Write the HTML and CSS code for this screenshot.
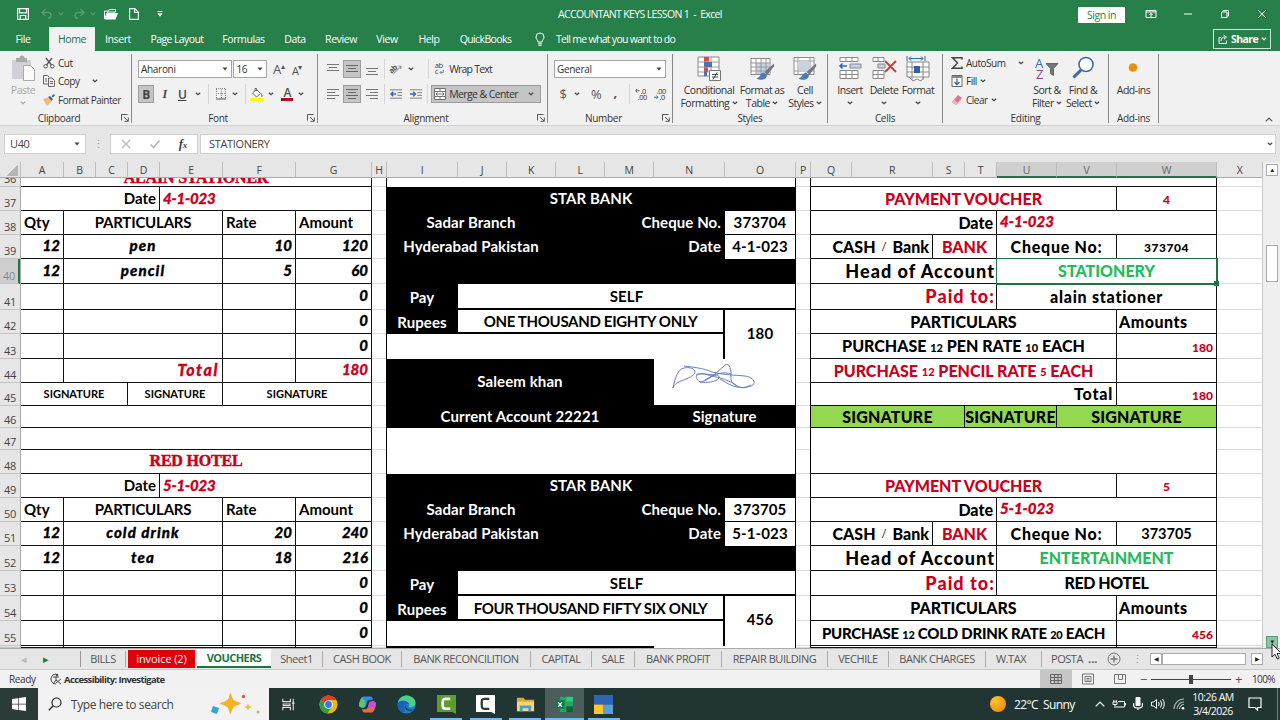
FILE: index.html
```html
<!DOCTYPE html>
<html lang="en">
<head>
    <meta charset="utf-8">
    <title>ACCOUNTANT KEYS LESSON 1 - Excel</title>
    <link rel="stylesheet" href="styles.css">
</head>
<body>
<svg class="symbols">
    <symbol id="chev" viewBox="0 0 6 4"><path d="M.8.8 3 2.8 5.200.8" fill="none" stroke="currentColor" stroke-width="1.2"/></symbol>
    <symbol id="tri" viewBox="0 0 6 4"><path d="M.5.5h5L3 3.500z" fill="currentColor"/></symbol>
    <symbol id="launch" viewBox="0 0 8 8"><path d="M.5 6.500v-6h6M3 3l4 4M7.300 3.500v3.800H3.500" fill="none" stroke="#555"/></symbol>
    <symbol id="brush" viewBox="0 0 20 18"><path d="M19 0 9 9l3 3 7-9z" fill="#777"/><path d="M8.500 9.500c-4 0-3 5-8 6 4 3 11 2 11-3z" fill="#4a7ab8"/></symbol>
    <symbol id="scribble" viewBox="0 0 84 26"><path d="M1 24C3 14 6 5 12 4c5-1 9 0 11 3 1 4-8 8-14 10-5 2-8 5-8 7M12 2c8 1 19 2 28 6 11 3 23 3 33 4 9 1 12 8 6 10-14 5-24-3-31-7M28 18c-6-5-5-9 5-8 9 1 16 1 14 4-3 4-11 5-19 4 9-1 19-12 23-15 5-6 7-1 8 5 0 9-1 10 6 14 5 3 10 1 14-1M33 16c9-6 19-9 26-6M24 11c6-3 11 0 16 1s20 5 25 10" fill="none" stroke="#5870b8" stroke-width=".9"/></symbol>
</svg>

<div class="titlebar">
    <div class="quick">
        <svg class="q-save" viewBox="0 0 12 12"><path d="M.6.6h10.800v10.800H.6zM2.500.6v4.200h7V.6M3.300 11.400V7.500h5.400v3.900" fill="none" stroke="#fff" stroke-width="1.200"/></svg>
        <svg class="q-undo dim" viewBox="0 0 12 10"><path d="M4.500 0 1 3.500 4.500 7M1 3.500h6a3 3 0 0 1 0 6" fill="none" stroke="currentColor" stroke-width="1.400"/></svg>
        <svg class="chev dim"><use href="#chev"/></svg>
        <svg class="q-redo dim" viewBox="0 0 12 10"><path d="M7.500 0 11 3.500 7.500 7M11 3.500H5a3 3 0 0 0 0 6" fill="none" stroke="currentColor" stroke-width="1.400"/></svg>
        <svg class="chev dim"><use href="#chev"/></svg>
        <svg class="q-open" viewBox="0 0 14 12"><path d="M.5 11V3h4l1-1.500h6V4H3.500z" fill="none" stroke="#fff"/><path d="M3.500 5H14l-2.500 6.500H.7z" fill="#fff"/></svg>
        <svg class="q-new" viewBox="0 0 10 12"><path d="M.6.6h5.200l3.600 3.600v7.200H.6zM5.600.6v3.800h3.800" fill="none" stroke="#fff" stroke-width="1.100"/></svg>
        <svg class="q-more" viewBox="0 0 6 6"><path d="M.5.600h5M.8 2.800h4.400L3 5.200z" fill="#fff" stroke="#fff" stroke-width=".8"/></svg>
    </div>
    <div class="doc-title">ACCOUNTANT KEYS LESSON 1&nbsp; -&nbsp; Excel</div>
    <div class="window-buttons">
        <span class="signin">Sign in</span>
        <svg class="wb" viewBox="0 0 12 12"><path d="M1 2.500h10v7H1zM1 4h10M6 9V5.500M4.300 7 6 5.300 7.700 7" fill="none" stroke="#fff"/></svg>
        <svg class="wb" viewBox="0 0 12 12"><path d="M2 6h8" stroke="#fff"/></svg>
        <svg class="wb" viewBox="0 0 12 12"><path d="M2.500 4h5.500v5.500H2.500zM4 4V2.500h5.500V8H8" fill="none" stroke="#fff"/></svg>
        <svg class="wb" viewBox="0 0 12 12"><path d="m2 2 8 8M10 2l-8 8" stroke="#fff"/></svg>
    </div>
</div>

<div class="menubar">
    <span class="menu m-file">File</span>
    <span class="menu m-home active">Home</span>
    <span class="menu m-insert">Insert</span>
    <span class="menu m-page">Page Layout</span>
    <span class="menu m-formulas">Formulas</span>
    <span class="menu m-data">Data</span>
    <span class="menu m-review">Review</span>
    <span class="menu m-view">View</span>
    <span class="menu m-help">Help</span>
    <span class="menu m-quick">QuickBooks</span>
    <svg class="bulb" viewBox="0 0 10 13"><path d="M3 9c0-2-2-2.500-2-5a4 4 0 0 1 8 0c0 2.500-2 3-2 5zM3 10.800h4M3.500 12.400h3" fill="none" stroke="#fff"/></svg>
    <span class="tell">Tell me what you want to do</span>
    <span class="share">
        <svg viewBox="0 0 10 10"><path d="M3 3.500H1v6h7.500v-3M3 7c0-3 2-4 4-4M5.500 1 8.500 3 6 5.200" fill="none" stroke="#fff"/></svg>
        <b>Share</b>
        <svg class="chev"><use href="#chev"/></svg>
    </span>
</div>

<div class="ribbon">
    <section class="group g-clipboard">
        <div class="tools">
            <div class="big off paste">
                <svg class="pic" viewBox="0 0 24 26"><path d="M1 4h19v19H1z" fill="#d3cfd6"/><path d="M5 2h3.500a2.500 2.500 0 0 1 5 0H16v4H5z" fill="#aaa"/><path d="M12.500 9.500h7l4 4v11h-11z" fill="#fafafa" stroke="#aaa"/></svg>
                <span>Paste</span>
                <svg class="chev"><use href="#chev"/></svg>
            </div>
            <div class="stack">
                <span class="item"><svg viewBox="0 0 12 12"><path d="m3 1 5.500 7M9 1 3.500 8" stroke="#555" stroke-width="1.300"/><circle cx="2.600" cy="9.300" r="1.800" fill="none" stroke="#555"/><circle cx="9.300" cy="9.300" r="1.800" fill="none" stroke="#555"/></svg>Cut</span>
                <span class="item copy"><svg viewBox="0 0 12 12"><path d="M5.500 9H.5V.5h4l1.500 1.500M5.500 3h3.500l2.500 2.500v6h-6zM2 4h2M2 6h2M7 6.500h3M7 8.500h3" fill="none" stroke="#666"/></svg>Copy<svg class="chev"><use href="#chev"/></svg></span>
                <span class="item"><svg viewBox="0 0 12 12"><path d="M0 5 5 3.500l3.500 4L4 12z" fill="#efb97b"/><path d="m5 3 2-1 3 3-1.500 2zM8.500 2 11 0l1 1.500-2 2z" fill="#44619a"/></svg>Format Painter</span>
            </div>
        </div>
        <div class="caption">Clipboard<svg class="launch"><use href="#launch"/></svg></div>
    </section>

    <section class="group g-font">
        <div class="tools rows">
            <div class="row">
                <span class="select s-font">Aharoni<svg class="chev"><use href="#tri"/></svg></span>
                <span class="select s-size">16<svg class="chev"><use href="#tri"/></svg></span>
                <span class="grow">A<small>▴</small></span>
                <span class="grow shrink">A<small>▾</small></span>
            </div>
            <div class="row">
                <span class="tb on bold">B</span>
                <span class="tb ital">I</span>
                <span class="tb under">U</span>
                <svg class="chev"><use href="#chev"/></svg>
                <i class="sep"></i>
                <svg class="ic bord" viewBox="0 0 12 12"><path d="M1 .5h10M1 5.500h10M1.500 1v10M6.500 1v10M10.500 1v10" fill="none" stroke="#888" stroke-dasharray="1 1"/><path d="M1 11h10" stroke="#555"/></svg>
                <svg class="chev"><use href="#chev"/></svg>
                <i class="sep"></i>
                <svg class="ic fill" viewBox="0 0 14 13"><path d="M0 10h13v3H0z" fill="#ff0"/><path d="m2.500 5 4-3.500 4 4-4 3.500zM5 3V.5h1.500V3" fill="#fff" stroke="#666"/><path d="M11 5c2 2 2 4 .5 4z" fill="#666"/></svg>
                <svg class="chev"><use href="#chev"/></svg>
                <span class="acolor">A</span>
                <svg class="chev"><use href="#chev"/></svg>
            </div>
        </div>
        <div class="caption">Font<svg class="launch"><use href="#launch"/></svg></div>
    </section>

    <section class="group g-align">
        <div class="tools rows">
            <div class="row">
                <span class="tb"><svg class="ic" viewBox="0 0 12 12"><path d="M0 1.500h12M2 4.500h8M0 7.500h12" stroke="#777"/></svg></span>
                <span class="tb on"><svg class="ic" viewBox="0 0 12 12"><path d="M0 2.500h12M2 5.500h8M0 8.500h12" stroke="#666"/></svg></span>
                <span class="tb"><svg class="ic" viewBox="0 0 12 12"><path d="M0 5.500h12M2 8.500h8M0 11.500h12" stroke="#777"/></svg></span>
                <i class="sep"></i>
                <svg class="ic" viewBox="0 0 14 12"><path d="M4 11.500 13 3M10 2.500l3 .5-.5 3" fill="none" stroke="#777"/><text x="-1" y="9" transform="rotate(-42 4 7)" font-size="9" font-weight="bold" fill="#555">ab</text></svg>
                <svg class="chev"><use href="#chev"/></svg>
                <i class="sep far"></i>
                <span class="wrap"><svg class="ic" viewBox="0 0 12 14"><text x="0" y="6" font-size="9" fill="#444">ab</text><text x="0" y="13" font-size="9" fill="#444">c</text><path d="M10 8v3H6M8 9l-2 2 2 2" fill="none" stroke="#777"/></svg>Wrap Text</span>
            </div>
            <div class="row">
                <span class="tb"><svg class="ic" viewBox="0 0 12 12"><path d="M0 1.500h12M0 4.500h8M0 7.500h12M0 10.500h8" stroke="#777"/></svg></span>
                <span class="tb on"><svg class="ic" viewBox="0 0 12 12"><path d="M0 1.500h12M2 4.500h8M0 7.500h12M2 10.500h8" stroke="#666"/></svg></span>
                <span class="tb"><svg class="ic" viewBox="0 0 12 12"><path d="M0 1.500h12M4 4.500h8M0 7.500h12M4 10.500h8" stroke="#777"/></svg></span>
                <i class="sep"></i>
                <svg class="ic" viewBox="0 0 13 12"><path d="M0 1.500h13M8 4.500h5M8 7.500h5M0 10.500h13" stroke="#777"/><path d="M6.500 6H1M3.500 3.500 1 6l2.500 2.500" fill="none" stroke="#2f6ab5" stroke-width="1.500"/></svg>
                <svg class="ic ind" viewBox="0 0 13 12"><path d="M0 1.500h13M8 4.500h5M8 7.500h5M0 10.500h13" stroke="#777"/><path d="M0 6h5.500M3.500 3.500 6 6 3.500 8.500" fill="none" stroke="#2f6ab5" stroke-width="1.500"/></svg>
                <i class="sep near"></i>
                <span class="merge"><svg class="ic" viewBox="0 0 12 12"><path d="M.5.500h11v11H.5zM.5 3.500h11M.5 8.500h11M6 .5v3M6 8.500v3M2 6h8M3.500 4.500 2 6l1.500 1.500M8.500 4.500 10 6 8.500 7.500" fill="#fff" stroke="#555" stroke-width=".8"/></svg>Merge &amp; Center<svg class="chev"><use href="#chev"/></svg></span>
            </div>
        </div>
        <div class="caption">Alignment<svg class="launch"><use href="#launch"/></svg></div>
    </section>

    <section class="group g-number">
        <div class="tools rows">
            <div class="row"><span class="select s-num">General<svg class="chev"><use href="#tri"/></svg></span></div>
            <div class="row signs">
                <span class="sign">$</span>
                <svg class="chev"><use href="#chev"/></svg>
                <span class="sign pct">%</span>
                <span class="sign comma">,</span>
                <i class="sep"></i>
                <svg class="ic" viewBox="0 0 13 13"><text x="6" y="6" font-size="8" fill="#333">.0</text><text x="3" y="13" font-size="8" fill="#333">.00</text><path d="M5 3H1M2.500 1 .8 3l1.700 2" fill="none" stroke="#555"/></svg>
                <svg class="ic dec" viewBox="0 0 13 13"><text x="3" y="6" font-size="8" fill="#333">.00</text><text x="6" y="13" font-size="8" fill="#333">.0</text><path d="M0 10h4M2.500 8l1.700 2-1.700 2" fill="none" stroke="#2f6ab5"/></svg>
            </div>
        </div>
        <div class="caption">Number<svg class="launch"><use href="#launch"/></svg></div>
    </section>

    <section class="group g-styles">
        <div class="tools">
            <div class="big b-cond">
                <svg class="pic" viewBox="0 0 24 26"><path d="M1 1h21v19H1z" fill="#fff" stroke="#888"/><path d="M1 6h21M1 11h21M1 16h21M8 1v19M14 1v19" stroke="#999"/><path d="M7 1h5v4.500H7zM7 11.500h4V16H7z" fill="#cf4b55"/><path d="M7 6h8v5H7zM7 16h3v4H7z" fill="#4b74ac"/><path d="M12.500 14.500h11v10h-11z" fill="#fff" stroke="#777"/><path d="M15 18.500h6M15 21h6M20 16.500l-4 7" stroke="#444"/></svg>
                <span>Conditional<br>Formatting <svg class="chev"><use href="#chev"/></svg></span>
            </div>
            <div class="big b-fmt">
                <svg class="pic" viewBox="0 0 24 26"><path d="M1 2.500h19v16H1z" fill="#fff" stroke="#888"/><path d="M6 7h14v11H6z" fill="#c4d3e8"/><path d="M1 7h19M1 11h19M1 15h19M6 2.500v16M11 2.500v16M16 2.500v16" stroke="#999"/><use href="#brush" x="6" y="7" width="19" height="18"/></svg>
                <span>Format as<br>Table <svg class="chev"><use href="#chev"/></svg></span>
            </div>
            <div class="big b-cell">
                <svg class="pic" viewBox="0 0 24 26"><path d="M1 1.500h20v17H1z" fill="#fff" stroke="#888"/><path d="M1 5h20M1 15h20M5 1.500v17M17 1.500v17" stroke="#999"/><path d="M5.500 5.500h11v9h-11z" fill="#c9d3e2"/><use href="#brush" x="5" y="7" width="19" height="18"/></svg>
                <span>Cell<br>Styles <svg class="chev"><use href="#chev"/></svg></span>
            </div>
        </div>
        <div class="caption">Styles</div>
    </section>

    <section class="group g-cells">
        <div class="tools">
            <div class="big b-34">
                <svg class="pic" viewBox="0 0 24 26"><path d="M2 1.500h18v4H2zM8 1.500v4M14 1.500v4M2 14.500h18v8H2zM2 18.500h18M8 14.500v8M14 14.500v8" fill="#fff" stroke="#888"/><path d="M12 8h11v4H12z" fill="#c3d5e5" stroke="#888"/><path d="M9 10H2M4.500 7.500 2 10l2.500 2.500" fill="none" stroke="#2f6ab5" stroke-width="1.600"/></svg>
                <span>Insert</span><svg class="chev"><use href="#chev"/></svg>
            </div>
            <div class="big b-34">
                <svg class="pic" viewBox="0 0 24 26"><path d="M1 1.500h11v4H1zM6 1.500v4M1 14.500h11v8H1zM1 18.500h11M6 14.500v8" fill="#fff" stroke="#888"/><path d="M6 8h7v4H6z" fill="#c3d5e5" stroke="#888"/><path d="m13 5 11 11M24 5 13 16" stroke="#d23b3b" stroke-width="1.900"/></svg>
                <span>Delete</span><svg class="chev"><use href="#chev"/></svg>
            </div>
            <div class="big b-34">
                <svg class="pic" viewBox="0 0 24 26"><path d="M1 6h22v15H1zM1 11h22M1 16h22M6 6v18M17 6v18M3 21l4 4 4-2 4 2 3-4" fill="#fff" stroke="#888"/><path d="M8 10h6v7H8z" fill="#2f62a5"/><path d="M1 0v5M19 0v5M3 2.500h14M5 .5 3 2.500l2 2M15 .5l2 2-2 2" fill="none" stroke="#2f6ab5"/></svg>
                <span>Format</span><svg class="chev"><use href="#chev"/></svg>
            </div>
        </div>
        <div class="caption">Cells</div>
    </section>

    <section class="group g-edit">
        <div class="tools">
            <div class="stack">
                <span class="item"><svg viewBox="0 0 12 12"><path d="M11 2.500V.8H1.500L6.500 6l-5 5.200H11V9.500" fill="none" stroke="#444" stroke-width="1.500"/></svg>AutoSum<svg class="chev push"><use href="#chev"/></svg></span>
                <span class="item"><svg viewBox="0 0 12 12"><path d="M1 .5h10v11H1z" fill="#fff" stroke="#666"/><path d="M1 1h10v2H1z" fill="#888"/><path d="M6 3.500V10M3.500 7 6 9.700 8.500 7" fill="none" stroke="#2f6ab5" stroke-width="1.300"/></svg>Fill<svg class="chev"><use href="#chev"/></svg></span>
                <span class="item"><svg viewBox="0 0 12 12"><path d="m1 8 6-7 4 3-6 7z" fill="#e4708f"/><path d="m1 8 2-2.300L7 9l-2 2z" fill="#f3b0c0"/></svg>Clear<svg class="chev"><use href="#chev"/></svg></span>
            </div>
            <div class="big b-sort">
                <svg class="pic" viewBox="0 0 24 26"><text x="0" y="11.500" font-size="13" fill="#3f6dab">A</text><text x="1" y="22.500" font-size="13" fill="#92379c">Z</text><path d="M11 7.500h12l-4.500 5v7l-3-2v-5z" fill="#777" stroke="#666"/></svg>
                <span>Sort &amp;<br>Filter <svg class="chev"><use href="#chev"/></svg></span>
            </div>
            <div class="big b-find">
                <svg class="pic" viewBox="0 0 24 26"><circle cx="15" cy="8.500" r="7" fill="#fff" stroke="#3c69a8" stroke-width="1.600"/><path d="M10 14 2.500 21.500" stroke="#3c69a8" stroke-width="3"/></svg>
                <span>Find &amp;<br>Select <svg class="chev"><use href="#chev"/></svg></span>
            </div>
        </div>
        <div class="caption">Editing</div>
    </section>

    <section class="group g-addins">
        <div class="tools">
            <div class="big b-add"><svg class="pic" viewBox="0 0 24 26"><circle cx="11" cy="11.500" r="4.300" fill="#e8920c"/></svg><span>Add-ins</span></div>
        </div>
        <div class="caption">Add-ins</div>
    </section>
    <svg class="collapse" viewBox="0 0 8 5"><path d="M.7 4.300 4 1l3.300 3.300" fill="none" stroke="#555" stroke-width="1.200"/></svg>
</div>

<div class="formula-bar">
    <div class="namebox">U40<svg class="chev"><use href="#tri"/></svg></div>
    <span class="dots">⋮</span>
    <div class="fx">
        <svg viewBox="0 0 10 10"><path d="m1 1 8 8M9 1 1 9" stroke="#bbb" stroke-width="1.400"/></svg>
        <svg viewBox="0 0 10 10"><path d="m.5 5.500 3 3L9.500 1.500" fill="none" stroke="#bbb" stroke-width="1.700"/></svg>
        <i>f<small>x</small></i>
    </div>
    <div class="formula">STATIONERY<svg class="chev"><use href="#chev"/></svg></div>
</div>

<div class="workbook">
    <div class="cols">
        <span class="corner"></span>
        <span>A</span><span>B</span><span>C</span><span>D</span><span>E</span><span>F</span><span>G</span><span>H</span>
        <span>I</span><span>J</span><span>K</span><span>L</span><span>M</span><span>N</span><span>O</span><span>P</span>
        <span>Q</span><span>R</span><span>S</span><span>T</span><span class="sel">U</span><span class="sel">V</span><span class="sel">W</span><span>X</span>
    </div>
    <div class="sheet">
        <div class="rownums">
            <span>36</span><span>37</span><span>38</span><span>39</span><span class="sel">40</span><span>41</span><span>42</span>
            <span>43</span><span>44</span><span>45</span><span>46</span><span>47</span><span>48</span><span>49</span>
            <span>50</span><span>51</span><span>52</span><span>53</span><span>54</span><span>55</span><span></span>
        </div>

        <div class="panel bill">
            <div class="s7 vendor cut">ALAIN STATIONER</div>
            <div class="s4 right">Date</div><div class="s3 script red up">4-1-023</div>
            <div>Qty</div><div class="s4 center up">PARTICULARS</div><div>Rate</div><div>Amount</div>
            <div class="script right">12</div><div class="s4 script center word">pen</div><div class="script right">10</div><div class="script right">120</div>
            <div class="script right">12</div><div class="s4 script center word">pencil</div><div class="script right">5</div><div class="script right">60</div>
            <div></div><div class="s4"></div><div></div><div class="script right">0</div>
            <div></div><div class="s4"></div><div></div><div class="script right">0</div>
            <div></div><div class="s4"></div><div></div><div class="script right">0</div>
            <div></div><div class="s4 script right red total">Total</div><div></div><div class="script right red">180</div>
            <div class="s3 sign-small">SIGNATURE</div><div class="s2 sign-small">SIGNATURE</div><div class="s2 sign-small">SIGNATURE</div>
            <div class="s7"></div>
            <div class="s7"></div>
            <div class="s7 vendor">RED HOTEL</div>
            <div class="s4 right">Date</div><div class="s3 script red up">5-1-023</div>
            <div>Qty</div><div class="s4 center up">PARTICULARS</div><div>Rate</div><div>Amount</div>
            <div class="script right">12</div><div class="s4 script center word">cold drink</div><div class="script right">20</div><div class="script right">240</div>
            <div class="script right">12</div><div class="s4 script center word">tea</div><div class="script right">18</div><div class="script right">216</div>
            <div></div><div class="s4"></div><div></div><div class="script right">0</div>
            <div></div><div class="s4"></div><div></div><div class="script right">0</div>
            <div></div><div class="s4"></div><div></div><div class="script right">0</div>
            <div></div><div class="s4"></div><div></div><div></div>
        </div>

        <div class="gutter"><i></i><i></i><i></i><i></i><i></i><i></i><i></i><i></i><i></i><i></i><i></i><i></i><i></i><i></i><i></i><i></i><i></i><i></i><i></i><i></i><i></i></div>

        <div class="panel cheque">
            <div class="s7 white"></div>
            <div class="s7 center">STAR BANK</div>
            <div class="s3 center">Sadar Branch</div><div class="s3 right">Cheque No.</div><div class="white center lined">373704</div>
            <div class="s3 center">Hyderabad Pakistan</div><div class="s3 right">Date</div><div class="white center">4-1-023</div>
            <div class="s7"></div>
            <div class="center low">Pay</div><div class="s6 white center thick">SELF</div>
            <div class="center low">Rupees</div><div class="s5 white center thick side sum">ONE THOUSAND EIGHTY ONLY</div><div class="white center r2">180</div>
            <div class="s6 white side"></div>
            <div class="s5 r2 center person">Saleem khan</div><div class="s2 r2 white signed"><svg><use href="#scribble"/></svg></div>
            <div class="s5 center">Current Account 22221</div><div class="s2 center">Signature</div>
            <div class="s7 r2 white"></div>
            <div class="s7 center">STAR BANK</div>
            <div class="s3 center">Sadar Branch</div><div class="s3 right">Cheque No.</div><div class="white center lined">373705</div>
            <div class="s3 center">Hyderabad Pakistan</div><div class="s3 right">Date</div><div class="white center">5-1-023</div>
            <div class="s7"></div>
            <div class="center low">Pay</div><div class="s6 white center thick">SELF</div>
            <div class="center low">Rupees</div><div class="s5 white center thick side sum">FOUR THOUSAND FIFTY SIX ONLY</div><div class="white center r2">456</div>
            <div class="s6 white side"></div>
            <div class="s5"></div><div class="s2 white"></div>
        </div>

        <div class="gutter"><i></i><i></i><i></i><i></i><i></i><i></i><i></i><i></i><i></i><i></i><i></i><i></i><i></i><i></i><i></i><i></i><i></i><i></i><i></i><i></i><i></i></div>

        <div class="panel voucher">
            <div class="s7"></div>
            <div class="s6 center red">PAYMENT VOUCHER</div><div class="center red num">4</div>
            <div class="s4 right">Date</div><div class="s3 script red up">4-1-023</div>
            <div class="s2 right caps">CASH <small>/</small> Bank</div><div class="s2 center red">BANK</div><div class="s2 center wide">Cheque No:</div><div class="center num spaced">373704</div>
            <div class="s4 right large">Head of Account</div><div class="s3 center green current">STATIONERY<i class="handle"></i></div>
            <div class="s4 right large red">Paid to:</div><div class="s3 center wide">alain stationer</div>
            <div class="s6 center">PARTICULARS</div><div class="amounts">Amounts</div>
            <div class="s6 center">PURCHASE&nbsp;<small>12</small>&nbsp;PEN RATE&nbsp;<small>10</small>&nbsp;EACH</div><div class="right red num">180</div>
            <div class="s6 center red">PURCHASE&nbsp;<small>12</small>&nbsp;PENCIL RATE&nbsp;<small>5</small>&nbsp;EACH</div><div></div>
            <div class="s6 right wide">Total</div><div class="right red num">180</div>
            <div class="s3 center lime">SIGNATURE</div><div class="s2 center lime">SIGNATURE</div><div class="s2 center lime">SIGNATURE</div>
            <div class="s7 r2"></div>
            <div class="s6 center red">PAYMENT VOUCHER</div><div class="center red num">5</div>
            <div class="s4 right">Date</div><div class="s3 script red up">5-1-023</div>
            <div class="s2 right caps">CASH <small>/</small> Bank</div><div class="s2 center red">BANK</div><div class="s2 center wide">Cheque No:</div><div class="center calibri">373705</div>
            <div class="s4 right large">Head of Account</div><div class="s3 center green">ENTERTAINMENT</div>
            <div class="s4 right large red">Paid to:</div><div class="s3 center hotel">RED HOTEL</div>
            <div class="s6 center">PARTICULARS</div><div class="amounts">Amounts</div>
            <div class="s6 center tight">PURCHASE&nbsp;<small>12</small>&nbsp;COLD DRINK RATE&nbsp;<small>20</small>&nbsp;EACH</div><div class="right red num">456</div>
            <div class="s6"></div><div></div>
        </div>

        <div class="gutter last"><i></i><i></i><i></i><i></i><i></i><i></i><i></i><i></i><i></i><i></i><i></i><i></i><i></i><i></i><i></i><i></i><i></i><i></i><i></i><i></i><i></i></div>
    </div>
    <div class="vscroll">
        <span class="arrow">▲</span>
        <span class="thumb"></span>
        <span class="arrow pressed">▼</span>
    </div>
    <svg class="cursor" viewBox="0 0 12 18"><path d="M1 1v13l3-2.800L6.200 16l2-.9L6 10.500h4.500z" fill="#fff" stroke="#222"/></svg>
</div>

<div class="tabs">
    <div class="nav"><span class="prev">◂</span><span class="next">▸</span></div>
    <span class="tab t-bills">BILLS</span>
    <span class="tab t-invoice">invoice (2)</span>
    <span class="tab t-vouchers">VOUCHERS</span>
    <span class="tab t-sheet1">Sheet1</span>
    <span class="tab t-cash">CASH BOOK</span>
    <span class="tab t-recon">BANK RECONCILITION</span>
    <span class="tab t-capital">CAPITAL</span>
    <span class="tab t-sale">SALE</span>
    <span class="tab t-profit">BANK PROFIT</span>
    <span class="tab t-repair">REPAIR BUILDING</span>
    <span class="tab t-vechile">VECHILE</span>
    <span class="tab t-charges">BANK CHARGES</span>
    <span class="tab t-wtax">W.TAX</span>
    <span class="tab t-posta">POSTA</span>
    <span class="ellipsis">...</span>
    <svg class="add" viewBox="0 0 14 14"><circle cx="7" cy="7" r="6" fill="none" stroke="#777"/><path d="M7 3.500v7M3.500 7h7" stroke="#777" stroke-width="1.400"/></svg>
    <span class="dots">⋮</span>
    <div class="hscroll"><span class="arrow">◀</span><span class="bar"></span><span class="arrow end">▶</span></div>
</div>

<div class="status">
    <span class="ready">Ready</span>
    <svg class="acc" viewBox="0 0 13 12"><path d="M7 1a5 5 0 1 0 0 10M4 4h6M7 4v3l-3 4M7 7l5 4M7 10l5-4" fill="none" stroke="#444"/><circle cx="8" cy="2" r="1.200" fill="#444"/></svg>
    <b class="access">Accessibility: Investigate</b>
    <span class="view on"><svg viewBox="0 0 12 12"><path d="M.5 1.500h11v9H.5zM.5 4.500h11M.5 7.500h11M4.500 1.500v9M8 1.500v9" fill="none" stroke="#666"/></svg></span>
    <span class="view"><svg viewBox="0 0 12 12"><path d="M.5 1h11v10H.5zM3 3.500h6v5H3zM4.500 5.500h3M4.500 7h3" fill="none" stroke="#777"/></svg></span>
    <span class="view"><svg viewBox="0 0 12 12"><path d="M.5 1.500h11v9H.5zM4.500 1.500v5M8.500 1.500v5M4.500 6.500h4" fill="none" stroke="#777"/></svg></span>
    <span class="zoom-sign">−</span>
    <span class="slider"><i></i></span>
    <span class="zoom-sign">+</span>
    <span class="percent">100%</span>
</div>

<div class="taskbar">
    <span class="start"><svg viewBox="0 0 14 14"><path d="M0 2l6-.8v5.500H0zM6.700 1.100 14 0v6.700H6.700zM0 7.400h6v5.500L0 12zM6.700 7.400H14V14l-7.300-1z" fill="#fff"/></svg></span>
    <div class="search">
        <svg class="glass" viewBox="0 0 14 14"><circle cx="8.500" cy="5.500" r="4.500" fill="none" stroke="#222" stroke-width="1.200"/><path d="M5.300 8.700.8 13.200" stroke="#222" stroke-width="1.300"/></svg>
        <span>Type here to search</span>
        <svg class="stars" viewBox="0 0 50 22"><path d="M19.500 1c1 6 3 8 9.500 9.500-6.500 1.500-8.500 3.500-9.500 9.500-1-6-3-8-9.500-9.500 6.500-1.500 8.500-3.500 9.500-9.500z" fill="#f3b51f" stroke="#f3b51f" stroke-width="1.500" stroke-linejoin="round"/><path d="M37 10c.5 2.500 1.500 3.500 4 4-2.500.5-3.500 1.500-4 4-.5-2.500-1.500-3.500-4-4 2.500-.5 3.500-1.500 4-4z" fill="#f1bd3d"/><path d="m2 13 6 2-2 6-6-2z" fill="#38a1d8"/><circle cx="32.500" cy="3.500" r="1.700" fill="#d85b35"/><circle cx="47" cy="19" r="1.500" fill="#b9ba72"/></svg>
    </div>
    <span class="app"><svg viewBox="0 0 20 20"><path d="M4 4v3h8V4M4 16v-3h8v3M4.500 9.500h7M4.500 9v2h7V9M15 4v12M13.500 8.500h3" fill="none" stroke="#ddd" stroke-width="1.200"/></svg></span>
    <span class="app"><svg viewBox="0 0 20 20"><circle cx="10" cy="10" r="9.500" fill="#e9b90f"/><path d="M10 10 1.800 5.200A9.500 9.500 0 0 1 18.200 5.200H10z" fill="#dc3d2e"/><path d="M1.800 5.200A9.500 9.500 0 0 0 9 19.500l4-7L10 10z" fill="#2e9c4c"/><circle cx="10" cy="10" r="4.600" fill="#fff"/><circle cx="10" cy="10" r="3.600" fill="#3c78e0"/></svg></span>
    <span class="app"><svg viewBox="0 0 20 20"><path d="M6.500 1.500H13c2 0 2.200 1.500 2.800 3.500H12c-2 0-2.500 2-3.200 5-.6 2.500-1.500 3.500-4 3.500C1 13.500.5 11 1.500 8c1.200-3.500 2-6.500 5-6.500z" fill="#2f8fe8"/><path d="M1.500 8c.8-2.500 1.500-4.700 3-5.800L8 8c-.5 3.500-1 5.500-3.200 5.500C1 13.500.5 11 1.500 8z" fill="#5cc46f"/><path d="M13.500 18.500H7c-2 0-2.200-1.500-2.800-3.500H8c2 0 2.500-2 3.200-5 .6-2.500 1.500-3.500 4-3.500 3.800 0 4.300 2.500 3.300 5.500-1.200 3.500-2 6.500-5 6.500z" fill="#f2663f"/><path d="M18.500 12c1-3 .5-5.500-3.300-5.500-2.500 0-3.400 1-4 3.500L10 14z" fill="#b554e0"/></svg></span>
    <span class="app"><svg viewBox="0 0 20 20"><circle cx="10" cy="10" r="9.500" fill="#1682d2"/><path d="M1 8C2 3 6 .5 10 .5c6 0 10 4 9.500 8.500-.5 3-3 4-6 4-1.500 0-1-1-.5-2C13 7 5 4 1 8z" fill="#4bd08a"/><path d="M.8 9C4 4 12 6 13 10c-6-3-8 3-4 8C4 19 0 14 .8 9z" fill="#1a63b8"/><path d="M10 10c-2 3 2 7 8 5-2 2-9 3-10-2 0-1 1-2 2-3z" fill="#17342f"/></svg></span>
    <span class="app open"><svg viewBox="0 0 20 20"><path d="M0 0h20v20l-4-2H0z" fill="#5e9d2d"/><path d="M14 4H9C6 4 6 5 6 9s0 5.500 3 5.500h5" fill="none" stroke="#fff" stroke-width="2.800"/></svg></span>
    <span class="app open"><svg viewBox="0 0 20 20"><path d="M0 0h20v20l-4-2H0z" fill="#fff"/><path d="M14 4H9C6 4 6 5 6 9s0 5.500 3 5.500h5" fill="none" stroke="#293f2c" stroke-width="2.400"/></svg></span>
    <span class="app open"><svg viewBox="0 0 20 20"><path d="M1 3h7l1.500 2H19v12H1z" fill="#dba63a"/><path d="M1 7h18v10H1z" fill="#f7d671"/><path d="M4 17v-6h12v6h-3v-3H7v3z" fill="#4a9fd0"/></svg></span>
    <span class="app open focus"><svg viewBox="0 0 20 20"><path d="M5 2h14v16H5z" fill="#27a366"/><path d="M12 2h7v5h-7z" fill="#33c481"/><path d="M12 12h7v6h-7z" fill="#185c37"/><path d="M1 5.500h9v9H1z" fill="#107c41"/><path d="m3.300 7.500 4 5M7.300 7.500l-4 5" stroke="#fff" stroke-width="1.500"/></svg></span>
    <span class="app open"><svg viewBox="0 0 20 20"><path d="M0 0h20v10H0z" fill="#2e66b3"/><path d="M0 10h9.500v10H0z" fill="#fdc82f"/><path d="M9.500 10H20v10H9.500z" fill="#5b9fd8"/></svg></span>
    <div class="tray">
        <span class="sun"></span>
        <span class="weather">22°C&nbsp; Sunny</span>
        <svg class="t-up" viewBox="0 0 10 6"><path d="M.7 5.300 5 1l4.300 4.300" fill="none" stroke="#fff" stroke-width="1.200"/></svg>
        <svg class="t-bat" viewBox="0 0 13 10"><path d="M5 2.500h6.500v5.500H3M12.500 4v2.500M.8 1v2M3.200 1v2M0 3h4v2.500H0zM2 5.500V9" fill="none" stroke="#fff"/></svg>
        <svg class="t-mic" viewBox="0 0 10 14"><rect x="2.500" width="5" height="9" rx="1" fill="#fff"/><path d="M.6 6v2.500Q.6 11 5 11t4.400-2.500V6M5 11v2" fill="none" stroke="#fff" stroke-width="1.200"/></svg>
        <svg class="t-vol" viewBox="0 0 14 12"><path d="M.5 4h2.200L5.500 1.500v9L2.700 8H.5zM7.500 4q1.500 2 0 4M9.500 2.500q2.500 3.500 0 7M11.500 1q3.500 5 0 10" fill="none" stroke="#fff"/></svg>
        <svg class="t-wifi" viewBox="0 0 12 12"><path d="M1 11A10 10 0 0 1 11 1M4 11a7 7 0 0 1 7-7M6.500 11A4.500 4.500 0 0 1 11 6.500" fill="none" stroke="#aab5b3" stroke-width="1.200"/><circle cx="10" cy="10.300" r="1.300" fill="#fff"/></svg>
        <span class="clock">10:26 AM<br>3/4/2026</span>
        <svg class="t-note" viewBox="0 0 14 14"><path d="M1 1h12v9.500h-3.500V13L7 10.500H1z" fill="none" stroke="#fff" stroke-width="1.200"/></svg>
        <i class="peek"></i>
    </div>
</div>
</body>
</html>
```
FILE: styles.css
```css
* {
    margin: 0;
    padding: 0;
    box-sizing: border-box;
}

body {
    --rows: 9px 24px 24px 24px 25px 26px 24px 25px 24px 23px 22px 22px 24px 24px 24px 24px 25px 25px 25px 25px 2px;
    width: 1280px;
    height: 720px;
    overflow: hidden;
    font-family: "Open Sans", "Noto Sans", sans-serif;
    font-size: 10.5px;
    letter-spacing: -0.35px;
    color: #333;
    background: #e6e6e6;
    white-space: nowrap;
}

svg {
    display: block;
    flex: none;
    overflow: visible;
}

.symbols {
    width: 0;
    height: 0;
    position: absolute;
}

.chev {
    width: 6px;
    height: 4px;
    color: #444;
}

/* title bar */
.titlebar {
    height: 27px;
    background: #27804a;
    color: #fff;
    display: flex;
    align-items: center;
}

.quick {
    width: 558px;
    flex: none;
    padding-left: 17px;
    display: flex;
    align-items: center;
}

.q-save { width: 12px; height: 12px; }
.q-undo, .q-redo { width: 12px; height: 10px; margin-left: 12px; }
.q-redo { margin-left: 9px; }
.quick .chev { margin-left: 5px; }
.quick .dim { color: #579c71; }
.q-open { width: 14px; height: 12px; margin-left: 8px; }
.q-new { width: 10px; height: 12px; margin-left: 11px; }
.q-more { width: 6px; height: 6px; margin-left: 18px; }

.doc-title {
    width: 520px;
    flex: none;
    padding-top: 1px;
    letter-spacing: -0.65px;
}

.window-buttons {
    display: flex;
    align-items: center;
    height: 24px;
}

.signin {
    width: 47px;
    height: 16px;
    margin: 2px 20px 0 0;
    line-height: 16px;
    text-align: center;
    background: #fff;
    color: #27804a;
    letter-spacing: -0.5px;
}

.wb {
    width: 12px;
    height: 12px;
    margin-right: 25px;
}

.wb:last-child { margin-right: 0; }

/* menu */
.menubar {
    height: 24px;
    background: #27804a;
    color: #fff;
    display: flex;
    align-items: center;
    letter-spacing: -0.4px;
}

.menu {
    height: 24px;
    line-height: 24px;
    text-align: center;
}

.menu.active {
    background: #f1f1f1;
    color: #217346;
}

.m-file { width: 46px; margin-right: 3px; }
.m-home { width: 46px; }
.m-insert { width: 46px; }
.m-page { width: 72px; letter-spacing: -0.6px; }
.m-formulas { width: 61px; }
.m-data { width: 42px; }
.m-review { width: 50px; }
.m-view { width: 42px; }
.m-help { width: 42px; }
.m-quick { width: 71px; letter-spacing: -0.6px; }

.bulb {
    width: 10px;
    height: 13px;
    margin: 0 11px 0 14px;
}

.tell { letter-spacing: -0.7px; }

.share {
    width: 58px;
    height: 20px;
    margin: 0 9px 0 auto;
    padding: 0 4px;
    border: 1px solid #cfe3d6;
    display: flex;
    align-items: center;
    gap: 3px;
    letter-spacing: -0.6px;
}

.share > svg:first-child { width: 10px; height: 10px; }
.share .chev { color: #fff; margin-left: auto; }

/* ribbon */
.ribbon {
    height: 75px;
    padding-top: 3px;
    background: #f1f1f1;
    border-bottom: 1px solid #d2d2d2;
    display: flex;
    align-items: flex-start;
    letter-spacing: -0.5px;
}

.group {
    height: 69px;
    border-right: 1px solid #8a8a8a;
    display: flex;
    flex-direction: column;
}

.g-clipboard { width: 132px; }
.g-font { width: 186px; }
.g-align { width: 230px; }
.g-number { width: 125px; }
.g-styles { width: 155px; }
.g-cells { width: 115px; }
.g-edit { width: 166px; }
.g-addins { width: 50px; }

.tools {
    height: 56px;
    display: flex;
}

.caption {
    position: relative;
    height: 13px;
    line-height: 17px;
    text-align: center;
    font-size: 10px;
    letter-spacing: -0.3px;
}

.g-clipboard .caption { padding-right: 13px; }
.g-font .caption, .g-align .caption, .g-number .caption { padding-right: 13px; }

.launch {
    position: absolute;
    right: 2px;
    top: 4px;
    width: 8px;
    height: 8px;
}

.big {
    display: flex;
    flex-direction: column;
    align-items: center;
    padding-top: 2px;
    text-align: center;
    line-height: 13px;
}

.big .pic {
    width: 24px;
    height: 26px;
    margin-bottom: 2px;
}

.big span .chev {
    display: inline-block;
    vertical-align: 2px;
}

.big > .chev { margin-top: 4px; }
.off { color: #aaa; }
.off .chev { color: #aaa; }
.paste { width: 40px; margin-left: 3px; }
.b-cond { width: 62px; margin-left: 5px; }
.b-fmt { width: 44px; }
.b-cell { width: 42px; }
.b-34 { width: 34px; }
.g-cells .tools { padding-left: 5px; }
.b-sort { width: 36px; margin-left: 4px; }
.b-find { width: 36px; }
.b-add { width: 49px; }

.stack { width: 87px; }
.g-edit .stack { width: 82px; margin-left: 8px; }
.g-edit .b-sort { margin-left: -4px; }

.item {
    height: 18.3px;
    display: flex;
    align-items: center;
    gap: 3px;
    font-size: 10px;
}

.item > svg:first-child { width: 12px; height: 12px; }
.copy .chev { margin-left: 10px; }
.item .push { margin-left: 10px; }

.rows {
    flex-direction: column;
    padding: 6px 6px 0;
    gap: 7px;
}

.row {
    height: 18px;
    display: flex;
    align-items: center;
}

.select {
    height: 18px;
    padding: 0 3px 0 2px;
    background: #fff;
    border: 1px solid #a6a6a6;
    display: flex;
    align-items: center;
    justify-content: space-between;
    font-size: 10px;
    letter-spacing: -0.3px;
}

.s-font { width: 99px; margin-right: 1px; }
.s-size { width: 35px; }
.s-num { width: 113px; }

.grow {
    width: 20px;
    margin-left: 6px;
    font-size: 13px;
    color: #555;
}

.grow small { font-size: 8px; vertical-align: 5px; }
.shrink { margin-left: 0; font-size: 11px; }

.tb {
    width: 18px;
    height: 18px;
    margin-right: 1.5px;
    display: flex;
    align-items: center;
    justify-content: center;
    font-size: 12px;
    color: #444;
}

.tb.on {
    background: #c5c5c5;
    border: 1px solid #9d9d9d;
}

.bold { font-weight: bold; }
.ital { font-family: "Liberation Serif", serif; font-style: italic; font-weight: bold; }
.under { text-decoration: underline; font-weight: 600; }
.ic { width: 12px; height: 12px; }
.sep { width: 1px; height: 20px; background: #d6d6d6; }

.g-font .ital { margin-left: 1px; }
.g-font .row > .chev { margin: 0 7px 0 3px; }
.g-font .bord { margin-left: 6px; }
.g-font .bord + .chev { margin-left: 5px; }
.g-font .fill { width: 14px; height: 13px; margin-left: 5px; }
.g-font .fill + .chev { margin-left: 4px; }

.acolor {
    width: 13px;
    height: 14px;
    border-bottom: 3px solid #c00018;
    margin-right: 2px;
    text-align: center;
    line-height: 12px;
    font-size: 12px;
    font-weight: 600;
    color: #555;
}

.g-align .sep { margin: 0 5px 0 2px; }
.g-align .row > .chev { margin-left: 6px; }
.g-align .sep.far { margin: 0 5px 0 14px; }
.g-align .sep.near { margin: 0 3px 0 5px; }
.g-align .ind { margin-left: 8px; }
.g-align .tb { margin-right: 1.4px; }

.wrap, .merge {
    display: flex;
    align-items: center;
    gap: 3px;
}

.wrap { letter-spacing: -0.8px; }

.merge {
    width: 110px;
    height: 18px;
    padding-left: 2px;
    background: #c5c5c5;
    border: 1px solid #9d9d9d;
    letter-spacing: -0.6px;
}

.merge .chev { margin-left: auto; margin-right: 6px; }

.sign { width: 12px; margin-left: 3px; font-size: 13px; color: #555; text-align: center; }
.pct { margin-left: 10px; }
.comma { font-weight: bold; margin: -5px 8px 0 7px; }
.signs .chev { margin-left: 5px; }
.signs .ic { margin-left: 5px; }
.signs .dec { margin-left: 7px; }

.collapse {
    width: 8px;
    height: 5px;
    margin: 63px 7px 0 auto;
}

/* formula bar */
.formula-bar {
    height: 36px;
    padding: 8px 4px;
    display: flex;
    font-size: 11px;
    color: #444;
}

.namebox, .fx, .formula {
    height: 20px;
    padding-bottom: 1px;
    background: #fff;
    border: 1px solid #d0d0d0;
    display: flex;
    align-items: center;
    justify-content: space-between;
}

.namebox { width: 82px; padding: 0 5px 1px; }
.dots { width: 24px; text-align: center; color: #999; line-height: 19px; }
.fx { width: 88px; padding: 0 10px 1px; }
.fx svg { width: 10px; height: 10px; }
.fx i { font-family: "Liberation Serif", serif; font-size: 13px; font-weight: bold; color: #444; }
.fx small { font-size: 9px; }
.formula { flex: 1; margin-left: 2px; padding: 0 2px 1px 8px; }

/* grid */
.workbook {
    position: relative;
    height: 486px;
    display: grid;
    grid-template-columns: 1263px 17px;
    grid-template-rows: 16px 470px;
}

.cols {
    display: grid;
    grid-template-columns: 21px 43px 32px 32px 32px 63px 73px 76px 15px 71px 49px 49px 49px 49px 71px 71px 15px 41px 81px 32px 32px 60px 60px 100px 46px;
    text-align: center;
    line-height: 16px;
    font-size: 10.5px;
    color: #444;
    border-bottom: 1px solid #aaa;
}

.cols span { border-right: 1px solid #bdbdbd; height: 16px; }
.cols .sel { background: #cfcfcf; border-bottom: 2px solid #217346; color: #666; }

.cols .corner {
    background: linear-gradient(135deg, transparent 60%, #b5b5b5 60%);
    background-size: 16px 13px;
    background-repeat: no-repeat;
    background-position: 2px 1px;
}

.sheet {
    grid-column: 1;
    display: grid;
    grid-template-columns: 21px 351px 15px 409px 15px 406px 46px;
    overflow: hidden;
    background: #fff;
}

.rownums, .panel, .gutter {
    display: grid;
    grid-template-rows: var(--rows);
}

.rownums {
    background: #e6e6e6;
    border-right: 1px solid #aaa;
    font-size: 11px;
    color: #444;
}

.rownums span {
    display: flex;
    align-items: flex-end;
    justify-content: center;
    overflow: hidden;
    line-height: 15px;
    border-bottom: 1px solid #c4c4c4;
}

.rownums .sel { background: #cfcfcf; border-right: 2px solid #217346; color: #888; }

.gutter { border-right: 1px solid #000; }
.gutter i { border-bottom: 1px solid #dcdcdc; }
.gutter.last { border-right-color: #c8c8c8; }

.panel {
    font-family: Lato, sans-serif;
    font-weight: bold;
    font-size: 15px;
    letter-spacing: 0;
    font-variant-ligatures: none;
    color: #000;
}

.panel > div {
    display: flex;
    align-items: center;
    overflow: hidden;
    padding: 0 3px 1px;
    border-right: 1px solid #111;
    border-bottom: 1px solid #111;
}

.s2 { grid-column: span 2; }
.s3 { grid-column: span 3; }
.s4 { grid-column: span 4; }
.s5 { grid-column: span 5; }
.s6 { grid-column: span 6; }
.s7 { grid-column: span 7; }
.r2 { grid-row: span 2; }

.panel .right { justify-content: flex-end; }
.panel .center { justify-content: center; }
.panel .red { color: #c8001c; }
.panel .green { color: #24bb5c; }

.panel .script {
    font-style: italic;
    font-weight: 900;
    font-size: 15px;
    padding-bottom: 3px;
    -webkit-text-stroke: .3px currentColor;
}

.panel .word { letter-spacing: 1.1px; }
.panel .total { font-size: 16px; letter-spacing: 1.6px; }

.bill { grid-template-columns: 43px 32px 32px 32px 63px 73px 76px; }
.bill .up { padding-bottom: 2px; letter-spacing: -0.2px; }

.panel .vendor {
    justify-content: center;
    font-family: "Liberation Serif", serif;
    font-size: 16px;
    letter-spacing: -0.2px;
    color: #c8001c;
    -webkit-text-stroke: .5px #c8001c;
}

.panel .cut { align-items: flex-end; line-height: 15px; padding-bottom: 1px; }
.panel .sign-small { justify-content: center; font-size: 11px; padding-bottom: 2px; }

.cheque {
    grid-template-columns: 71px 49px 49px 49px 49px 71px 71px;
    background: #000;
}

.cheque > div { color: #fff; border-color: #000; border-bottom-width: 0; padding-bottom: 2px; letter-spacing: .1px; }
.cheque > .white { color: #000; background: #fff; }
.cheque > .lined { border-bottom-width: 1px; }
.cheque > .thick { border-bottom-width: 2px; padding-bottom: 0; }
.cheque > .side { border-right-width: 2px; }
.cheque > .sum { letter-spacing: -0.32px; }
.cheque > .low { padding-bottom: 0; }
.cheque > .r2 { padding-bottom: 4px; }
.cheque > .signed { align-items: flex-start; padding: 5px 0 0 18px; border-bottom-width: 1px; }
.signed svg { width: 84px; height: 26px; }

.voucher {
    grid-template-columns: 41px 81px 32px 32px 60px 60px 100px;
    font-weight: 900;
    font-size: 16px;
}

.voucher small { font-size: 11px; padding-top: 3px; }
.voucher .caps small { padding: 0 6px; font-weight: normal; }
.voucher .large { font-size: 18px; letter-spacing: 1.05px; padding-right: 1px; }
.voucher .num { font-size: 12px; padding-top: 3px; }
.voucher .spaced { letter-spacing: .5px; }
.voucher .calibri { font-size: 14.5px; font-weight: bold; }
.voucher .wide { letter-spacing: .75px; }
.voucher .amounts { letter-spacing: .5px; padding-left: 2px; }
.voucher .hotel { letter-spacing: -0.4px; }
.voucher .tight { font-size: 15px; letter-spacing: -0.25px; }
.voucher .lime { background: #92d94f; padding: 0 0 1px; letter-spacing: .2px; }

.panel > .current {
    position: relative;
    overflow: visible;
    box-shadow: 0 0 0 1px #217346;
    border-color: #217346;
    z-index: 1;
}

.handle {
    position: absolute;
    right: -3px;
    bottom: -3px;
    width: 5px;
    height: 5px;
    background: #217346;
}

.vscroll {
    grid-column: 2;
    grid-row: 1 / 3;
    padding: 2px 3px 0;
    background: #efefef;
    display: flex;
    flex-direction: column;
}

.arrow {
    width: 12px;
    height: 12px;
    background: #fff;
    border: 1px solid #ababab;
    font-size: 6px;
    line-height: 10px;
    text-align: center;
    color: #222;
}

.thumb {
    width: 12px;
    height: 38px;
    margin: 69px 0 354px;
    background: #fff;
    border: 1px solid #ababab;
}

.pressed { background: #8fc3a5; border-color: #5f9c7a; }

.cursor {
    position: absolute;
    left: 1271px;
    top: 481px;
    width: 12px;
    height: 18px;
    z-index: 2;
}

/* sheet tabs */
.tabs {
    height: 22px;
    padding-bottom: 1px;
    border-top: 1px solid #ababab;
    border-bottom: 1px solid #c8c8c8;
    display: flex;
    align-items: center;
    color: #555;
    font-size: 11px;
    letter-spacing: -0.45px;
}

.nav { width: 81px; height: 16px; line-height: 16px; border-right: 1px solid #999; display: flex; }
.prev { margin-left: 21px; color: #bbb; }
.next { margin-left: 16px; color: #217346; }

.tab {
    height: 16px;
    line-height: 16px;
    text-align: center;
    border-right: 1px solid #aaa;
}

.t-bills { width: 45px; margin-right: 2px; }
.t-invoice { width: 67px; height: 18px; line-height: 18px; background: #e0000b; color: #fff; border: none; margin-right: 2px; letter-spacing: -0.1px; }
.t-vouchers { width: 74px; height: 19px; line-height: 18px; background: #fff; color: #217346; font-weight: bold; border: none; border-bottom: 2px solid #217346; letter-spacing: -0.55px; }
.t-sheet1 { width: 52px; }
.t-cash { width: 79px; }
.t-recon { width: 129px; }
.t-capital { width: 61px; }
.t-sale { width: 43px; }
.t-profit { width: 87px; }
.t-repair { width: 106px; }
.t-vechile { width: 61px; }
.t-charges { width: 97px; }
.t-wtax { width: 56px; padding-right: 5px; }
.t-posta { width: 41px; padding-left: 9px; border: none; }
.ellipsis { width: 24px; padding-left: 5px; font-weight: bold; letter-spacing: 0; }
.add { width: 14px; height: 14px; }
.tabs .dots { width: 29px; padding-left: 3px; }
.hscroll { display: flex; }
.hscroll .bar { width: 84px; height: 12px; background: #fff; border: 1px solid #ababab; margin-right: 5px; }

/* status bar */
.status {
    height: 18px;
    background: #f1f1f1;
    display: flex;
    align-items: center;
    font-size: 10px;
}

.ready { width: 49px; padding-left: 9px; }
.acc { width: 13px; height: 12px; margin-right: 2px; }
.access { width: 976px; font-size: 9.5px; letter-spacing: -0.62px; }
.view { width: 32px; height: 18px; display: flex; align-items: center; justify-content: center; }
.view.on { background: #c6c6c6; }
.view svg { width: 12px; height: 12px; }
.zoom-sign { width: 15px; text-align: center; font-size: 13px; color: #555; }
.slider { width: 80px; height: 1px; background: #444; display: flex; align-items: center; justify-content: center; }
.slider i { width: 4px; height: 9px; background: #444; }
.percent { margin-left: 6px; letter-spacing: -0.6px; }

/* taskbar */
.taskbar {
    height: 32px;
    background: #213533;
    color: #fff;
    display: flex;
}

.start { width: 38px; background: #2b3b39; display: flex; align-items: center; justify-content: center; }
.start svg { width: 14px; height: 14px; }

.search {
    width: 231px;
    padding: 0 8px 0 10px;
    background: #f2f2f2;
    color: #444;
    display: flex;
    align-items: center;
    font-size: 12px;
    letter-spacing: -0.42px;
}

.glass { width: 14px; height: 14px; margin-right: 9px; }
.stars { width: 50px; height: 22px; margin-left: auto; }

.app {
    width: 39.4px;
    display: flex;
    align-items: center;
    justify-content: center;
}

.app svg { width: 19px; height: 19px; }
.app.open { background: linear-gradient(#76b9ed, #76b9ed) bottom / 32px 2px no-repeat; }
.app.focus { background: linear-gradient(#76b9ed, #76b9ed) bottom / 100% 2px no-repeat #4a5f5d; }

.tray {
    margin-left: auto;
    display: flex;
    align-items: center;
}

.sun { width: 16px; height: 16px; border-radius: 50%; background: radial-gradient(circle at 30% 30%, #ffc42a, #ee7c0c); margin-right: 8px; }
.weather { width: 81px; font-size: 12px; letter-spacing: -0.6px; }
.t-up { width: 10px; height: 6px; margin-right: 8px; }
.t-bat { width: 13px; height: 10px; margin-right: 7px; }
.t-mic { width: 10px; height: 14px; margin-right: 8px; }
.t-vol { width: 14px; height: 12px; margin-right: 8px; }
.t-wifi { width: 12px; height: 12px; }
.clock { width: 56px; text-align: center; line-height: 14px; font-size: 10.5px; letter-spacing: -0.5px; }
.t-note { width: 14px; height: 14px; margin: 0 15px 0 7px; }
.peek { width: 3px; height: 32px; border-left: 1px solid #71807e; }
```
